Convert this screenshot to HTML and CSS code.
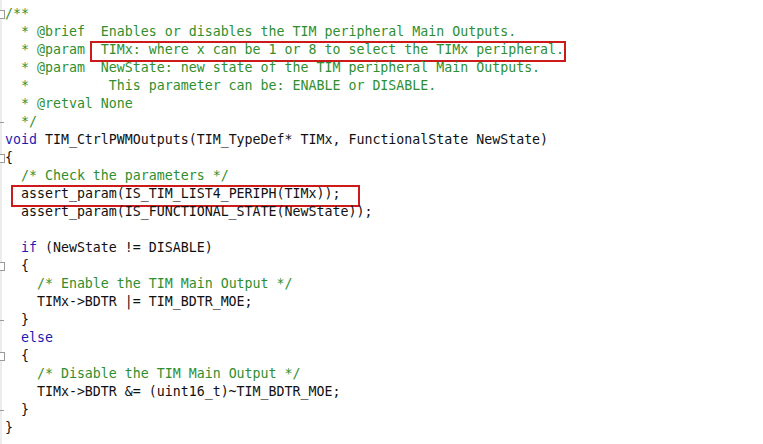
FILE: index.html
```html
<!DOCTYPE html>
<html>
<head>
<meta charset="utf-8">
<link rel="stylesheet" href="styles.css">
</head>
<body>
<div class="code">
<div class="ln fold"><span class="c">/**</span></div>
<div class="ln"><span class="c">  * @brief  Enables or disables the TIM peripheral Main Outputs.</span></div>
<div class="ln"><span class="c">  * @param  <span class="mark m1">TIMx: where x can be 1 or 8 to select the TIMx peripheral.</span></span></div>
<div class="ln"><span class="c">  * @param  NewState: new state of the TIM peripheral Main Outputs.</span></div>
<div class="ln"><span class="c">  *          This parameter can be: ENABLE or DISABLE.</span></div>
<div class="ln"><span class="c">  * @retval None</span></div>
<div class="ln end"><span class="c">  */</span></div>
<div class="ln"><span class="k">void</span> TIM_CtrlPWMOutputs(TIM_TypeDef* TIMx, FunctionalState NewState)</div>
<div class="ln fold">{</div>
<div class="ln">  <span class="c">/* Check the parameters */</span></div>
<div class="ln">  <span class="mark m2">assert_param(IS_TIM_LIST4_PERIPH(TIMx));</span></div>
<div class="ln">  assert_param(IS_FUNCTIONAL_STATE(NewState));</div>
<div class="ln"> </div>
<div class="ln">  <span class="k">if</span> (NewState != DISABLE)</div>
<div class="ln fold">  {</div>
<div class="ln">    <span class="c">/* Enable the TIM Main Output */</span></div>
<div class="ln">    TIMx-&gt;BDTR |= TIM_BDTR_MOE;</div>
<div class="ln end">  }</div>
<div class="ln">  <span class="k">else</span></div>
<div class="ln fold">  {</div>
<div class="ln">    <span class="c">/* Disable the TIM Main Output */</span></div>
<div class="ln">    TIMx-&gt;BDTR &amp;= (uint16_t)~TIM_BDTR_MOE;</div>
<div class="ln end">  }</div>
<div class="ln">}</div>
</div>
</body>
</html>
```
FILE: styles.css
```css
html, body {
  margin: 0;
  padding: 0;
  background: #ffffff;
}
body {
  width: 763px;
  height: 444px;
  overflow: hidden;
  background: linear-gradient(to right, #ececec 0, #ececec 2px, #ffffff 2px);
}
.code {
  padding: 5px 0 0 5px;
  font-family: "DejaVu Sans Mono", monospace;
  font-size: 13.28px;
  line-height: 18px;
  color: #111111;
}
.ln {
  position: relative;
  height: 18px;
  white-space: pre;
}
.c { color: #2f8f2f; }
.k { color: #1d1db4; }
.fold::before {
  content: "";
  position: absolute;
  left: -9px;
  top: 5px;
  width: 7px;
  height: 7px;
  border: 1px solid #9a9a9a;
  background: #fff;
}
.end::before {
  content: "";
  position: absolute;
  left: -5px;
  top: 9px;
  width: 4px;
  height: 1px;
  background: #9a9a9a;
}
.mark {
  position: relative;
}
.mark::after {
  content: "";
  position: absolute;
  top: -1px;
  bottom: -5px;
  border: 2px solid #cc1a1a;
}
.m1::after {
  left: -11px;
  right: -2px;
}
.m2::after {
  left: -10px;
  right: -20px;
  bottom: -6px;
}
```
